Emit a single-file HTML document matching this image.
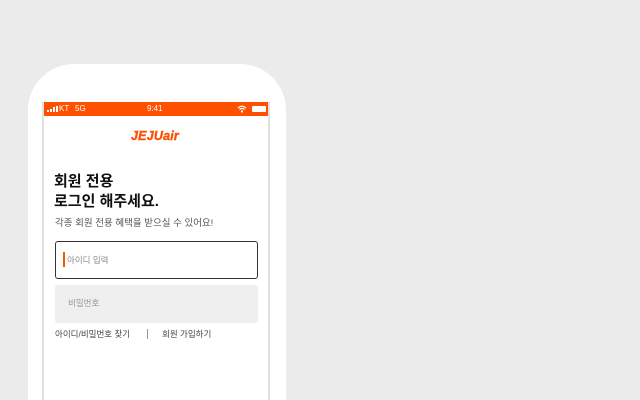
<!DOCTYPE html>
<html><head><meta charset="utf-8"><style>
*{margin:0;padding:0;box-sizing:border-box}
html,body{width:640px;height:400px;overflow:hidden}
body{background:#ebebeb;position:relative;font-family:"Liberation Sans","Noto Sans CJK KR",sans-serif}
.phone{position:absolute;left:28px;top:64px;width:258px;height:336px;background:#fff;border-radius:46px 46px 0 0}
.screen{position:absolute;left:42px;top:102px;width:228px;height:298px;border:2px solid #e2e2e2;border-top:none;border-bottom:none;background:#fff}
.sb{position:absolute;left:0;top:0;width:224px;height:14px;background:#ff5000;color:#fff;font-size:8px;line-height:14px}
.abs{position:absolute}
</style></head><body>
<div class="phone"></div>
<div class="screen">
 <div class="sb">
  <svg class="abs" style="left:3px;top:4px" width="12" height="6"><rect x="0" y="4" width="2" height="2" fill="#fff"/><rect x="3" y="3" width="2" height="3" fill="#fff"/><rect x="6" y="1" width="2" height="5" fill="#fff"/><rect x="9" y="0" width="2" height="6" fill="#fff"/></svg>
  <span class="abs" style="left:15px">KT</span><span class="abs" style="left:31px">5G</span>
  <span class="abs" style="left:103px">9:41</span>
  <svg class="abs" style="left:193px;top:3px" width="10" height="8"><path d="M1 3Q5 -0.5 9 3M2.5 4.5Q5 2.5 7.5 4.5" stroke="#fff" stroke-width="1.2" fill="none"/><circle cx="5" cy="6.5" r="1.1" fill="#fff"/></svg>
  <div class="abs" style="left:208px;top:4px;width:14px;height:6px;background:#fff;border-radius:1px"></div>
 </div>
 <div class="abs" style="left:87px;top:27px;color:#ff5000;font-weight:bold;font-style:italic;font-size:12.5px;letter-spacing:0.2px;-webkit-text-stroke:0.4px #ff5000">JEJUair</div>
 <div class="abs" style="left:10px;top:70px;font-size:15px;font-weight:bold;line-height:20px;color:#111">회원 전용<br>로그인 해주세요.</div>
 <div class="abs" style="left:11px;top:113px;font-size:9.5px;color:#555">각종 회원 전용 혜택을 받으실 수 있어요!</div>
 <div class="abs" style="left:11px;top:139px;width:203px;height:38px;border:1.5px solid #333;border-radius:3px">
  <div class="abs" style="left:7px;top:10px;width:1.5px;height:15px;background:#ff5000"></div>
  <span class="abs" style="left:11px;top:12px;font-size:8.5px;color:#888">아이디 입력</span>
 </div>
 <div class="abs" style="left:11px;top:183px;width:203px;height:38px;background:#efefef;border-radius:3px">
  <span class="abs" style="left:13px;top:12px;font-size:8.5px;color:#999">비밀번호</span>
 </div>
 <div class="abs" style="left:11px;top:226px;font-size:8.5px;color:#444">아이디/비밀번호 찾기</div>
 <div class="abs" style="left:103px;top:227px;width:1px;height:10px;background:#999"></div>
 <div class="abs" style="left:118px;top:226px;font-size:8.5px;color:#444">회원 가입하기</div>
</div>
</body></html>
